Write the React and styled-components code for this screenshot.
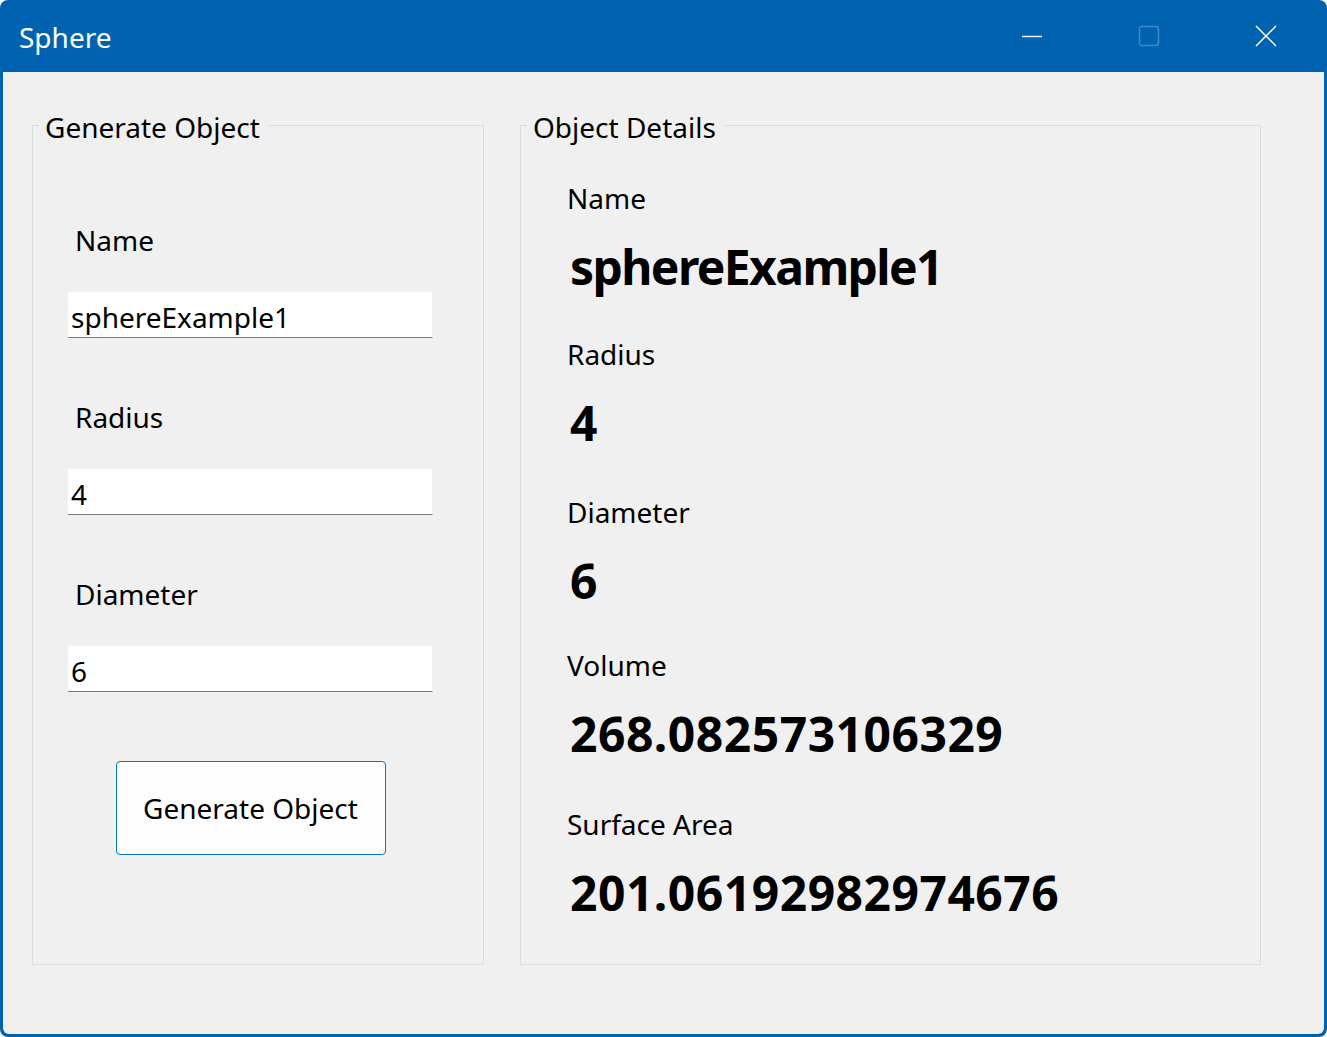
import React from "react";
import styled, { createGlobalStyle } from "styled-components";

const GlobalStyle = createGlobalStyle`
  html, body {
    margin: 0;
    padding: 0;
    background: #ffffff;
  }
  * { box-sizing: border-box; }
`;

const FONT = `"Noto Sans", "Open Sans", sans-serif`;

const Window = styled.div`
  width: 1327px;
  height: 1037px;
  background: #0063b1;
  border-radius: 8px;
  padding: 0 3px 3px 3px;
  display: flex;
  flex-direction: column;
  font-family: ${FONT};
  overflow: hidden;
`;

const TitleBar = styled.div`
  height: 72px;
  flex: none;
  display: flex;
  align-items: center;
  justify-content: space-between;
  color: #ffffff;
`;

const Title = styled.div`
  font-size: 28px;
  line-height: 38px;
  padding-left: 16px;
  padding-top: 1px;
`;

const Controls = styled.div`
  display: flex;
  height: 100%;
`;

const CaptionButton = styled.div`
  width: 117px;
  height: 100%;
  display: flex;
  align-items: center;
  justify-content: center;
`;

const Content = styled.div`
  flex: 1;
  background: #f0f0f0;
  border-radius: 0 0 6px 6px;
  display: flex;
  align-items: flex-start;
  gap: 36px;
  padding: 32px 0 0 29px;
`;

const GroupBox = styled.fieldset`
  margin: 0;
  width: ${(p) => p.$width}px;
  height: 861px;
  border: 1px solid #dcdcdc;
  padding: 0;
  display: flex;
  flex-direction: column;
`;

const Legend = styled.legend`
  font-size: 28px;
  line-height: 38px;
  color: #000;
  margin-left: 6px;
  padding: 4px 8px 0 6px;
`;

const FormColumn = styled.div`
  width: 365px;
  margin-left: 35px;
  display: flex;
  flex-direction: column;
`;

const FieldLabel = styled.div`
  font-size: 28px;
  line-height: 38px;
  color: #000;
  margin-left: 7px;
  margin-top: ${(p) => p.$mt}px;
  margin-bottom: 32px;
`;

const TextInput = styled.input`
  width: 365px;
  height: 47px;
  background: #ffffff;
  border: none;
  border-top: 1px solid #f2f2f2;
  border-right: 1px solid #f2f2f2;
  border-bottom: 1px solid #7a7a7a;
  padding: 5px 0 0 3px;
  font-family: ${FONT};
  font-size: 28px;
  color: #000;
  outline: none;
`;

const ActionButton = styled.button`
  align-self: center;
  margin-top: 69px;
  width: 270px;
  height: 94px;
  background: #fdfdfd;
  border: 1px solid #0078d4;
  border-radius: 4px;
  font-family: ${FONT};
  font-size: 28px;
  color: #000;
  padding: 0 0 0 0;
  cursor: pointer;
`;

const DetailList = styled.div`
  display: flex;
  flex-direction: column;
  padding: 33px 0 0 46px;
`;

const DetailItem = styled.div`
  display: flex;
  flex-direction: column;
  margin-top: ${(p) => p.$mt}px;
`;

const DetailLabel = styled.div`
  font-size: 28px;
  line-height: 38px;
  color: #000;
`;

const DetailValue = styled.div`
  font-size: 48px;
  line-height: 64px;
  font-weight: 700;
  color: #000;
  margin-top: 18px;
  margin-left: 3px;
  letter-spacing: ${(p) => p.$tracking}px;
`;

const MinimizeIcon = () => (
  <svg width="22" height="22" viewBox="0 0 22 22">
    <line x1="1" y1="11.5" x2="21" y2="11.5" stroke="#fff" strokeWidth="1.4" />
  </svg>
);

const MaximizeIcon = () => (
  <svg width="22" height="22" viewBox="0 0 22 22">
    <rect x="1.5" y="1.5" width="19" height="19" rx="2.5" fill="none" stroke="#3f88c9" strokeWidth="1.4" />
  </svg>
);

const CloseIcon = () => (
  <svg width="22" height="22" viewBox="0 0 22 22">
    <path d="M1 1 L21 21 M21 1 L1 21" stroke="#fff" strokeWidth="1.5" />
  </svg>
);

const fields = [
  { label: "Name", value: "sphereExample1", mt: 75 },
  { label: "Radius", value: "4", mt: 60 },
  { label: "Diameter", value: "6", mt: 60 },
];

const details = [
  { label: "Name", value: "sphereExample1", mt: 0, tracking: -1.6 },
  { label: "Radius", value: "4", mt: 36, tracking: 0.5 },
  { label: "Diameter", value: "6", mt: 38, tracking: 0.5 },
  { label: "Volume", value: "268.082573106329", mt: 33, tracking: 0.5 },
  { label: "Surface Area", value: "201.06192982974676", mt: 39, tracking: 0.5 },
];

export default function App() {
  return (
    <>
      <GlobalStyle />
      <Window>
        <TitleBar>
          <Title>Sphere</Title>
          <Controls>
            <CaptionButton><MinimizeIcon /></CaptionButton>
            <CaptionButton><MaximizeIcon /></CaptionButton>
            <CaptionButton><CloseIcon /></CaptionButton>
          </Controls>
        </TitleBar>
        <Content>
          <GroupBox $width={452}>
            <Legend>Generate Object</Legend>
            <FormColumn>
              {fields.map((f) => (
                <React.Fragment key={f.label}>
                  <FieldLabel $mt={f.mt}>{f.label}</FieldLabel>
                  <TextInput defaultValue={f.value} />
                </React.Fragment>
              ))}
              <ActionButton>Generate Object</ActionButton>
            </FormColumn>
          </GroupBox>
          <GroupBox $width={741}>
            <Legend>Object Details</Legend>
            <DetailList>
              {details.map((d) => (
                <DetailItem key={d.label} $mt={d.mt}>
                  <DetailLabel>{d.label}</DetailLabel>
                  <DetailValue $tracking={d.tracking}>{d.value}</DetailValue>
                </DetailItem>
              ))}
            </DetailList>
          </GroupBox>
        </Content>
      </Window>
    </>
  );
}
